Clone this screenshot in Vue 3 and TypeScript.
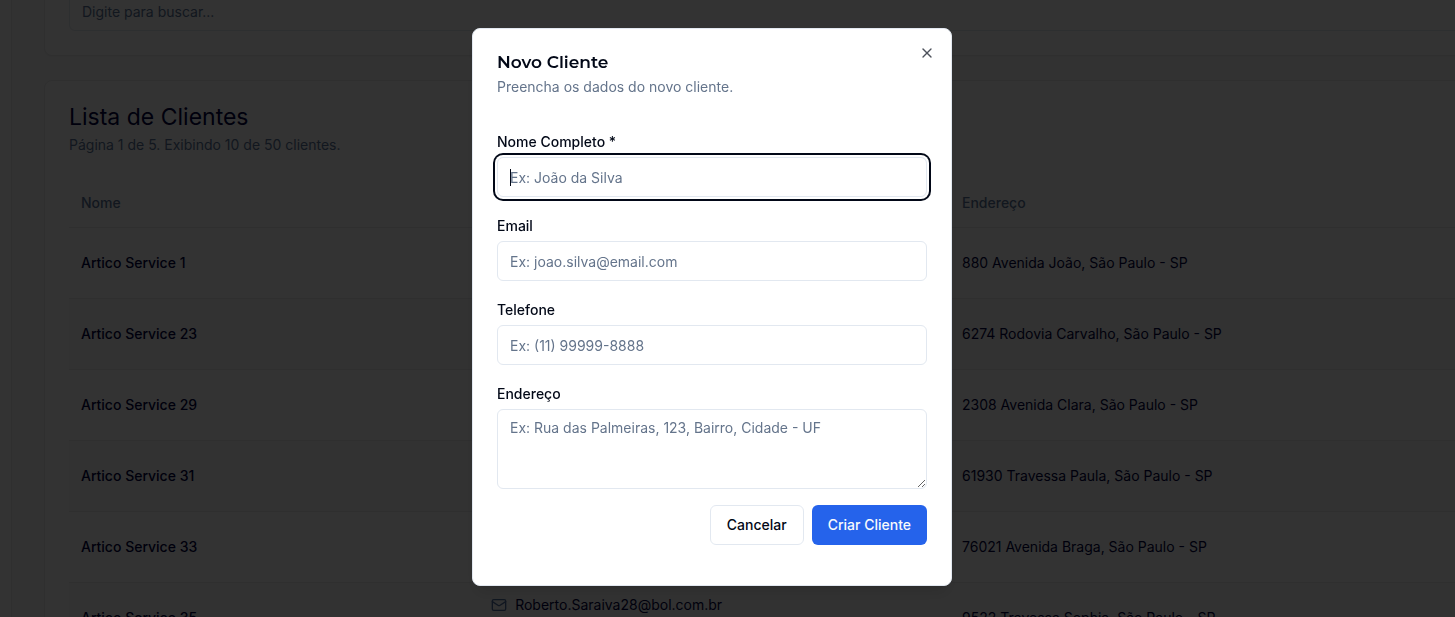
<script setup lang="ts">
import { onMounted, ref } from 'vue'

interface Client {
  name: string
  email?: string
  address: string
}

const clients: Client[] = [
  { name: 'Artico Service 1', address: '880 Avenida João, São Paulo - SP' },
  { name: 'Artico Service 23', address: '6274 Rodovia Carvalho, São Paulo - SP' },
  { name: 'Artico Service 29', address: '2308 Avenida Clara, São Paulo - SP' },
  { name: 'Artico Service 31', address: '61930 Travessa Paula, São Paulo - SP' },
  { name: 'Artico Service 33', address: '76021 Avenida Braga, São Paulo - SP' },
  { name: 'Artico Service 35', email: 'Roberto.Saraiva28@bol.com.br', address: '9522 Travessa Sophia, São Paulo - SP' },
]

const search = ref('')
const name = ref('')
const email = ref('')
const phone = ref('')
const address = ref('')
const nameInput = ref<HTMLInputElement | null>(null)

onMounted(() => nameInput.value?.focus())
</script>

<template>
  <div class="shell">
    <aside class="sidebar"></aside>
    <main class="main">
      <section class="card">
        <input v-model="search" class="control search" type="text" placeholder="Digite para buscar..." aria-label="Buscar clientes" />
      </section>
      <section class="card">
        <h1 class="card-title">Lista de Clientes</h1>
        <p class="card-text">Página 1 de 5. Exibindo 10 de 50 clientes.</p>
        <table class="table">
          <colgroup>
            <col class="col-name" />
            <col class="col-contact" />
            <col />
          </colgroup>
          <thead>
            <tr>
              <th scope="col">Nome</th>
              <td></td>
              <th scope="col">Endereço</th>
            </tr>
          </thead>
          <tbody>
            <tr v-for="client in clients" :key="client.name">
              <td class="name">{{ client.name }}</td>
              <td>
                <div v-if="client.email" class="contact">
                  <div class="email">
                    <svg width="16" height="16" viewBox="0 0 24 24" fill="none" stroke="currentColor" stroke-width="2" stroke-linecap="round" stroke-linejoin="round" aria-hidden="true">
                      <rect width="20" height="16" x="2" y="4" rx="2" />
                      <path d="m22 7-8.97 5.7a1.94 1.94 0 0 1-2.06 0L2 7" />
                    </svg>
                    <span>{{ client.email }}</span>
                  </div>
                </div>
              </td>
              <td>{{ client.address }}</td>
            </tr>
          </tbody>
        </table>
      </section>
    </main>
  </div>

  <div class="overlay">
    <div class="dialog" role="dialog" aria-modal="true" aria-labelledby="dialog-title">
      <h2 id="dialog-title" class="dialog-title">Novo Cliente</h2>
      <p class="dialog-text">Preencha os dados do novo cliente.</p>
      <form class="form" @submit.prevent>
        <div class="field">
          <label for="name">Nome Completo *</label>
          <div class="caret-box">
            <input id="name" ref="nameInput" v-model="name" class="control" :class="{ empty: !name }" type="text" placeholder="Ex: João da Silva" />
            <span v-if="!name" class="caret" aria-hidden="true"></span>
          </div>
        </div>
        <div class="field">
          <label for="email">Email</label>
          <input id="email" v-model="email" class="control" type="email" placeholder="Ex: joao.silva@email.com" />
        </div>
        <div class="field">
          <label for="phone">Telefone</label>
          <input id="phone" v-model="phone" class="control" type="tel" placeholder="Ex: (11) 99999-8888" />
        </div>
        <div class="field">
          <label for="address">Endereço</label>
          <textarea id="address" v-model="address" class="control area" placeholder="Ex: Rua das Palmeiras, 123, Bairro, Cidade - UF"></textarea>
        </div>
        <div class="actions">
          <button class="btn outline" type="button">Cancelar</button>
          <button class="btn primary" type="submit">Criar Cliente</button>
        </div>
      </form>
      <button class="close" type="button" aria-label="Fechar">
        <svg width="16" height="16" viewBox="0 0 24 24" fill="none" stroke="currentColor" stroke-width="2" stroke-linecap="round" stroke-linejoin="round" aria-hidden="true">
          <path d="M18 6 6 18" />
          <path d="m6 6 12 12" />
        </svg>
      </button>
    </div>
  </div>
</template>

<style>
body {
  margin: 0;
  font-family: Inter, "Liberation Sans", sans-serif;
  font-size: 14px;
  line-height: 20px;
  color: #020817;
}

*,
*::before,
*::after {
  box-sizing: border-box;
}
</style>

<style scoped>
.shell {
  display: flex;
  height: 100vh;
  overflow: hidden;
  background: #fff;
  color: #020440;
}

.sidebar {
  flex: none;
  width: 12px;
  border-right: 1px solid #e8e8ec;
}

/* The page behind the dialog is scrolled past the top of the search card. */
.main {
  flex: 1;
  min-width: 0;
  display: flex;
  flex-direction: column;
  gap: 24px;
  margin-top: -34px;
  padding-left: 32px;
  background: #fbfbfb;
}

/* Cards run on past the right edge of the window. */
.card {
  flex: none;
  width: calc(100% + 158px);
  padding: 24px;
  border: 1px solid #e8e8ec;
  border-radius: 8px;
  background: #fff;
  box-shadow: 0 1px 2px rgba(0, 0, 0, 0.05);
}

.card-title {
  margin: 0 0 6px;
  font-size: 23px;
  font-weight: 400;
  line-height: 24px;
}

.card-text {
  margin: 0 0 24px;
  color: #5c7599;
}

.table {
  width: 100%;
  table-layout: fixed;
  border-collapse: separate;
  border-spacing: 0;
}

.col-name {
  width: 27%;
}

.col-contact {
  width: 31%;
}

th,
td {
  height: 71px;
  padding: 0 12px;
  border-bottom: 1px solid #e8e8ec;
  text-align: left;
  vertical-align: middle;
}

thead th,
thead td {
  height: 49px;
  font-weight: 500;
  color: #5c7599;
}

tbody tr:nth-child(even) {
  background: #f8f8f8;
}

.name {
  font-weight: 500;
}

.contact {
  min-height: 46px;
}

.email {
  display: flex;
  align-items: center;
  gap: 8px;
}

.email svg {
  color: #50719f;
}

.control {
  display: block;
  width: 100%;
  height: 40px;
  margin: 0;
  padding: 8px 12px;
  border: 1px solid #e2e8f0;
  border-radius: 6px;
  outline: none;
  background: #fff;
  color: #020817;
  font: inherit;
}

.control::placeholder {
  color: #64748b;
  opacity: 1;
}

.search::placeholder {
  color: #5c7599;
}

.control:focus {
  box-shadow: 0 0 0 2px #fff, 0 0 0 4px #020817;
}

.area {
  height: 80px;
  resize: vertical;
}

.caret-box {
  position: relative;
}

.empty {
  caret-color: transparent;
}

.caret {
  position: absolute;
  top: 12px;
  left: 13px;
  width: 1px;
  height: 17px;
  background: #020817;
  pointer-events: none;
}

.overlay {
  position: fixed;
  inset: 0;
  display: flex;
  align-items: center;
  justify-content: center;
  padding: 0 31px 3px 0;
  background: rgba(0, 0, 0, 0.8);
}

.dialog {
  position: relative;
  width: 100%;
  max-width: 480px;
  padding: 24px 24px 40px;
  border: 1px solid #e2e8f0;
  border-radius: 8px;
  background: #fff;
  box-shadow: 0 10px 15px -3px rgba(0, 0, 0, 0.1), 0 4px 6px -4px rgba(0, 0, 0, 0.1);
}

.dialog-title {
  margin: 0 0 6px;
  font-family: Montserrat, Inter, sans-serif;
  font-size: 17px;
  font-weight: 600;
  line-height: 18px;
}

.dialog-text {
  margin: 0 0 38px;
  color: #64748b;
}

.form {
  display: flex;
  flex-direction: column;
  gap: 22px;
}

.field {
  display: flex;
  flex-direction: column;
  gap: 8px;
}

label {
  font-weight: 500;
  line-height: 14px;
}

.actions {
  display: flex;
  justify-content: flex-end;
  gap: 8px;
  margin-top: -6px;
}

.btn {
  height: 40px;
  padding: 0 16px;
  border: 0;
  border-radius: 6px;
  font: inherit;
  font-weight: 500;
}

.outline {
  border: 1px solid #e2e8f0;
  background: #fff;
  color: #020817;
}

.primary {
  background: #2563eb;
  color: #f8fafc;
}

.close {
  position: absolute;
  top: 16px;
  right: 16px;
  display: flex;
  padding: 0;
  border: 0;
  background: none;
  color: #020817;
  opacity: 0.7;
}
</style>
